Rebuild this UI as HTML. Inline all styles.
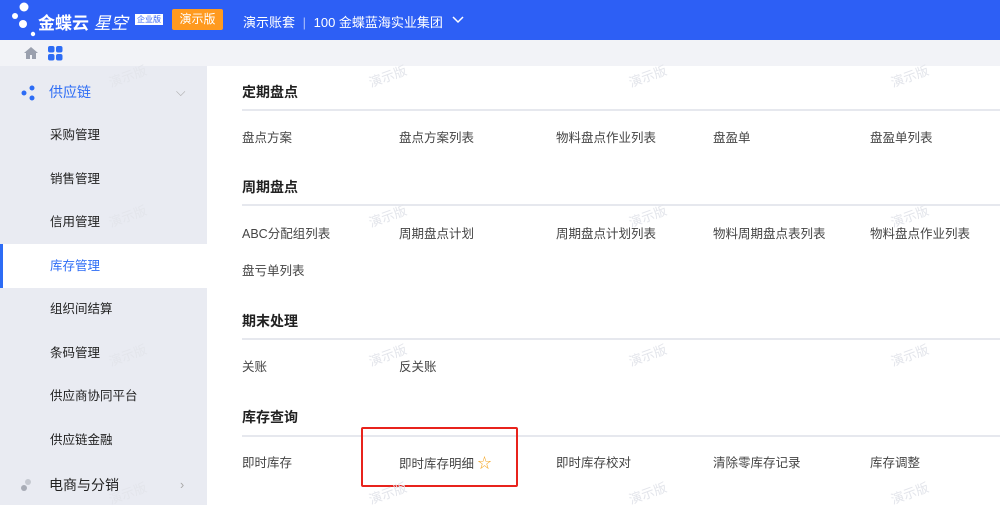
<!DOCTYPE html>
<html><head><meta charset="utf-8"><style>
*{margin:0;padding:0;box-sizing:border-box}
body{width:1000px;height:505px;overflow:hidden;font-family:"Liberation Sans","Noto Sans CJK SC",sans-serif;background:#fff;position:relative}
.hd{position:absolute;left:0;top:0;width:1000px;height:40px;background:#2d5ff5;color:#fff}
.sub{position:absolute;left:0;top:40px;width:1000px;height:26px;background:#f2f3f7}
.side{position:absolute;left:0;top:66px;width:207px;height:439px;background:#e9ebf2}
.it{position:absolute;left:50px;font-size:12.5px;color:#222;line-height:16px}
.sel{position:absolute;left:0;top:244px;width:207px;height:44px;background:#fff;border-left:3px solid #2d6cf5}
.t{position:absolute;font-size:14px;font-weight:bold;color:#222;line-height:18px}
.ln{position:absolute;left:242px;width:758px;height:2px;background:#e6e8ee}
.c{position:absolute;font-size:12.5px;color:#444;line-height:16px}
.wm{position:absolute;font-size:13px;color:#e3e5eb;transform:rotate(-20deg)}
</style></head><body>
<div class="hd">
<svg style="position:absolute;left:10px;top:1px" width="28" height="38"><circle cx="14" cy="6" r="4.5" fill="#fff"/><circle cx="5" cy="15" r="3" fill="#fff"/><circle cx="13" cy="23" r="4" fill="#fff"/><circle cx="23" cy="33" r="2.2" fill="#fff"/></svg>
<div style="position:absolute;left:38px;top:9px;font-size:17px;font-weight:bold">金蝶云 <span style="font-weight:normal;font-style:italic">星空</span></div>
<div style="position:absolute;left:135px;top:14px;width:28px;height:11px;background:#fff;color:#2d5ff5;font-size:8px;line-height:11px;text-align:center">企业版</div>
<div style="position:absolute;left:172px;top:9px;width:51px;height:21px;background:#ff9a1f;font-size:12px;line-height:21px;text-align:center;border-radius:2px">演示版</div>
<div style="position:absolute;left:243px;top:12px;font-size:13px">演示账套 <span style="opacity:.6;margin:0 4px">|</span> 100 金蝶蓝海实业集团</div>
<svg style="position:absolute;left:452px;top:16px" width="12" height="8"><path d="M1 1l5 5 5-5" stroke="#fff" stroke-width="1.5" fill="none"/></svg>
</div>
<div class="sub">
<svg style="position:absolute;left:23px;top:6px" width="16" height="14"><path d="M8 1L1 7h2v6h4V9h2v4h4V7h2z" fill="#9aa0ae"/></svg>
<svg style="position:absolute;left:48px;top:6px" width="15" height="15"><rect x="0" y="0" width="6.5" height="6.5" rx="2" fill="#2d6cf5"/><rect x="8" y="0" width="6.5" height="6.5" rx="2" fill="#2d6cf5"/><rect x="0" y="8" width="6.5" height="6.5" rx="2" fill="#2d6cf5"/><rect x="8" y="8" width="6.5" height="6.5" rx="2" fill="#2d6cf5"/></svg>
</div>
<div class="side"></div>
<div class="sel"></div>
<svg style="position:absolute;left:21px;top:85px" width="16" height="16"><circle cx="3" cy="8" r="2.5" fill="#2d6cf5"/><circle cx="11" cy="3" r="2.5" fill="#2d6cf5"/><circle cx="11" cy="13" r="2.5" fill="#2d6cf5"/></svg>
<div class="it" style="left:49px;top:84px;font-size:14px;color:#2d6cf5">供应链</div>
<div class="it" style="left:176px;top:84px;color:#aaa">⌵</div>
<div class="it" style="top:127px">采购管理</div>
<div class="it" style="top:171px">销售管理</div>
<div class="it" style="top:214px">信用管理</div>
<div class="it" style="top:258px;color:#2d6cf5">库存管理</div>
<div class="it" style="top:301px">组织间结算</div>
<div class="it" style="top:345px">条码管理</div>
<div class="it" style="top:388px">供应商协同平台</div>
<div class="it" style="top:432px">供应链金融</div>
<svg style="position:absolute;left:20px;top:478px" width="14" height="14"><circle cx="8" cy="4" r="3" fill="#c5c8d0"/><circle cx="4" cy="10" r="3" fill="#a8acb6"/></svg>
<div class="it" style="left:49px;top:477px;font-size:14px">电商与分销</div>
<div class="it" style="left:180px;top:477px;color:#aaa">›</div>

<div class="t" style="left:242px;top:83px">定期盘点</div><div class="ln" style="top:109px"></div>
<div class="c" style="left:242px;top:130px">盘点方案</div><div class="c" style="left:399px;top:130px">盘点方案列表</div><div class="c" style="left:556px;top:130px">物料盘点作业列表</div><div class="c" style="left:713px;top:130px">盘盈单</div><div class="c" style="left:870px;top:130px">盘盈单列表</div>
<div class="t" style="left:242px;top:178px">周期盘点</div><div class="ln" style="top:204px"></div>
<div class="c" style="left:242px;top:226px">ABC分配组列表</div><div class="c" style="left:399px;top:226px">周期盘点计划</div><div class="c" style="left:556px;top:226px">周期盘点计划列表</div><div class="c" style="left:713px;top:226px">物料周期盘点表列表</div><div class="c" style="left:870px;top:226px">物料盘点作业列表</div>
<div class="c" style="left:242px;top:263px">盘亏单列表</div>
<div class="t" style="left:242px;top:312px">期末处理</div><div class="ln" style="top:338px"></div>
<div class="c" style="left:242px;top:359px">关账</div><div class="c" style="left:399px;top:359px">反关账</div>
<div class="t" style="left:242px;top:408px">库存查询</div><div class="ln" style="top:435px"></div>
<div class="c" style="left:242px;top:455px">即时库存</div><div class="c" style="left:399px;top:455px">即时库存明细 <span style="color:#f5a623;font-size:14px">☆</span></div><div class="c" style="left:556px;top:455px">即时库存校对</div><div class="c" style="left:713px;top:455px">清除零库存记录</div><div class="c" style="left:870px;top:455px">库存调整</div>
<div style="position:absolute;left:361px;top:427px;width:157px;height:60px;border:2px solid #e8231c;border-radius:2px"></div>

<div class="wm" style="left:108px;top:66px">演示版</div><div class="wm" style="left:368px;top:66px">演示版</div><div class="wm" style="left:628px;top:66px">演示版</div><div class="wm" style="left:890px;top:66px">演示版</div>
<div class="wm" style="left:108px;top:206px">演示版</div><div class="wm" style="left:368px;top:206px">演示版</div><div class="wm" style="left:628px;top:206px">演示版</div><div class="wm" style="left:890px;top:206px">演示版</div>
<div class="wm" style="left:108px;top:345px">演示版</div><div class="wm" style="left:368px;top:345px">演示版</div><div class="wm" style="left:628px;top:345px">演示版</div><div class="wm" style="left:890px;top:345px">演示版</div>
<div class="wm" style="left:108px;top:483px">演示版</div><div class="wm" style="left:368px;top:483px">演示版</div><div class="wm" style="left:628px;top:483px">演示版</div><div class="wm" style="left:890px;top:483px">演示版</div>
</body></html>
